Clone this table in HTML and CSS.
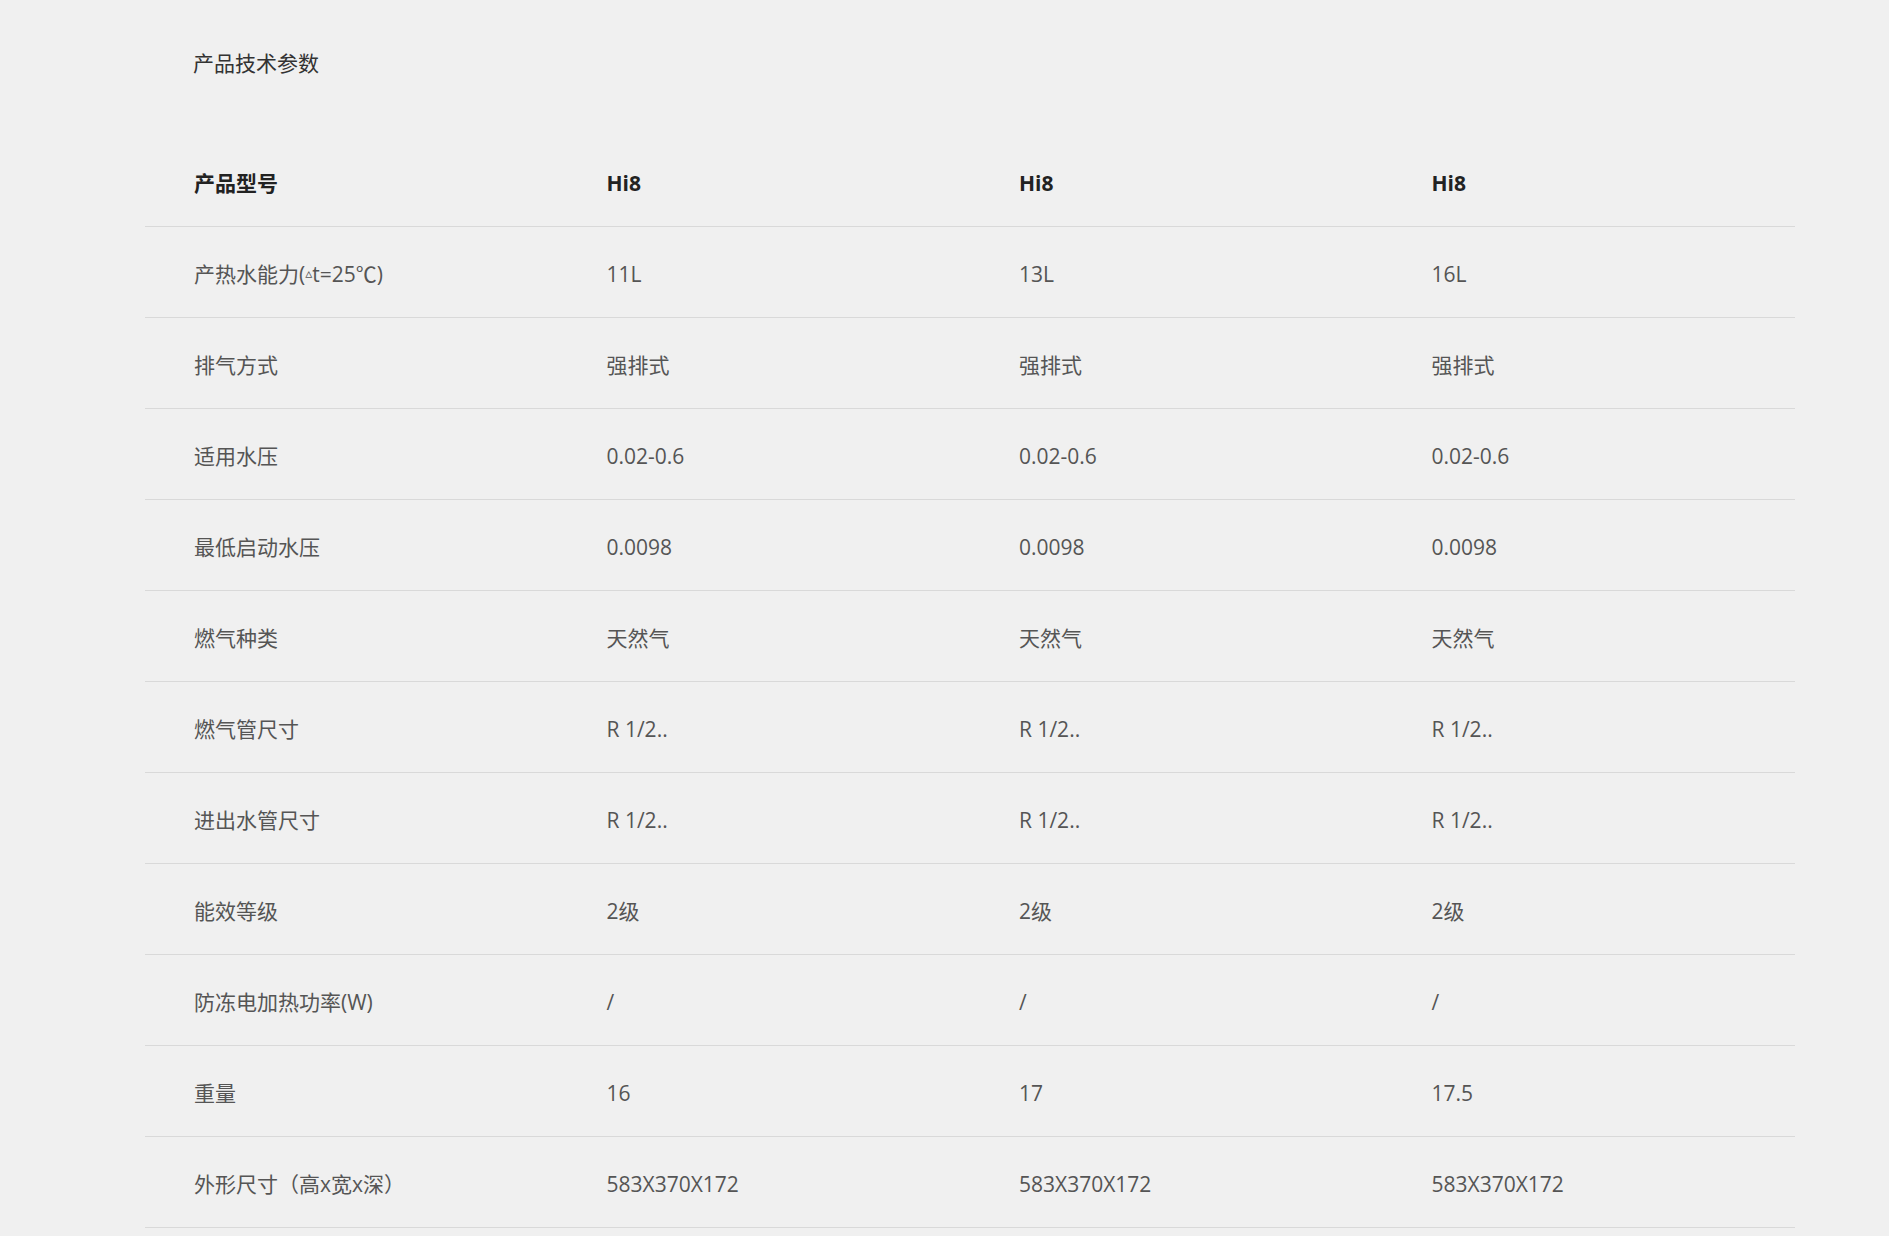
FILE: index.html
```html
<!DOCTYPE html>
<html lang="zh-CN">
<head>
<meta charset="utf-8">
<title>产品技术参数</title>
<link rel="stylesheet" href="styles.css">
</head>
<body>
<div class="page">
  <h2 class="title">产品技术参数</h2>
  <table class="spec">
    <thead>
      <tr><th>产品型号</th><th>Hi8</th><th>Hi8</th><th>Hi8</th></tr>
    </thead>
    <tbody>
      <tr><td>产热水能力(<span class="tri">▵</span>t=25℃)</td><td>11L</td><td>13L</td><td>16L</td></tr>
      <tr><td>排气方式</td><td>强排式</td><td>强排式</td><td>强排式</td></tr>
      <tr><td>适用水压</td><td>0.02-0.6</td><td>0.02-0.6</td><td>0.02-0.6</td></tr>
      <tr><td>最低启动水压</td><td>0.0098</td><td>0.0098</td><td>0.0098</td></tr>
      <tr><td>燃气种类</td><td>天然气</td><td>天然气</td><td>天然气</td></tr>
      <tr><td>燃气管尺寸</td><td>R 1/2..</td><td>R 1/2..</td><td>R 1/2..</td></tr>
      <tr><td>进出水管尺寸</td><td>R 1/2..</td><td>R 1/2..</td><td>R 1/2..</td></tr>
      <tr><td>能效等级</td><td>2级</td><td>2级</td><td>2级</td></tr>
      <tr><td>防冻电加热功率(W)</td><td>/</td><td>/</td><td>/</td></tr>
      <tr><td>重量</td><td>16</td><td>17</td><td>17.5</td></tr>
      <tr><td>外形尺寸（高x宽x深）</td><td>583X370X172</td><td>583X370X172</td><td>583X370X172</td></tr>
    </tbody>
  </table>
</div>
</body>
</html>
```

FILE: styles.css
```css
html, body {
  margin: 0;
  padding: 0;
  background: #f0f0f0;
}
body {
  font-family: "Open Sans", "Noto Sans CJK SC", sans-serif;
  color: #555;
}
.page {
  padding: 48px 0 0 145px;
  width: 1650px;
}
.title {
  margin: 0 0 58px 48px;
  font-size: 21px;
  line-height: 30px;
  font-weight: normal;
  color: #333;
}
.spec {
  width: 1650px;
  border-collapse: collapse;
  table-layout: fixed;
}
.spec th,
.spec td {
  height: 87px;
  padding: 3px 0 0 49px;
  text-align: left;
  vertical-align: middle;
  font-size: 21px;
  line-height: 28px;
  border-bottom: 1px solid #d9d9d9;
  white-space: nowrap;
}
.spec th {
  font-weight: bold;
  color: #222;
}
.spec td {
  font-weight: normal;
  color: #555;
}
.tri {
  font-family: "DejaVu Sans", sans-serif;
  font-size: 14px;
  vertical-align: 4px;
}
```
